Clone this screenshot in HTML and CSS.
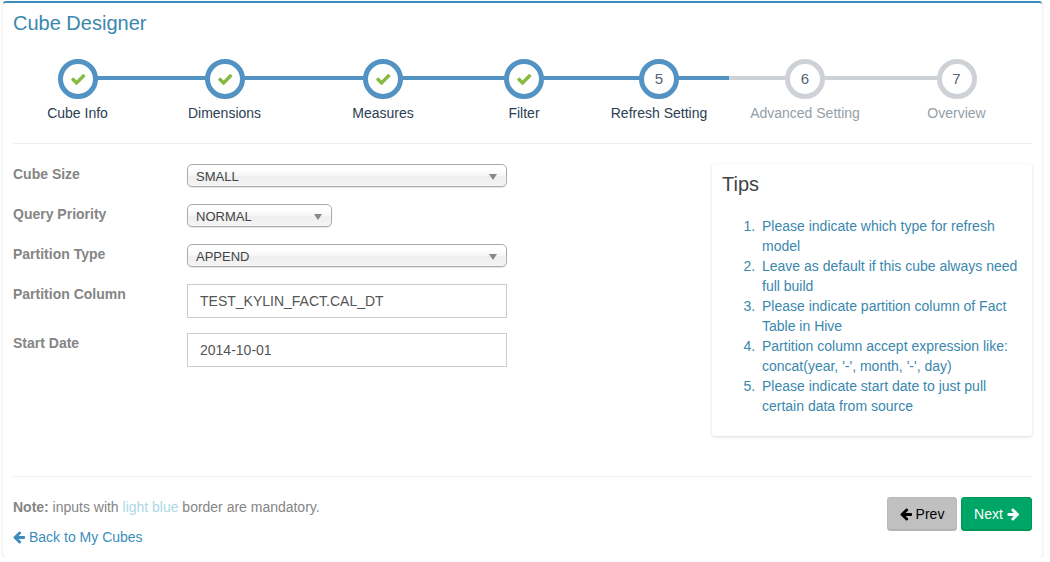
FILE: index.html
```html
<!DOCTYPE html>
<html lang="en">
<head>
<meta charset="utf-8">
<title>Cube Designer</title>
<link rel="stylesheet" href="styles.css">
</head>
<body>
<svg class="sprite" width="0" height="0">
  <symbol id="check" viewBox="0 0 1792 1792"><path d="M1671 566q0 40-28 68l-724 724-136 136q-28 28-68 28t-68-28l-136-136-362-362q-28-28-28-68t28-68l136-136q28-28 68-28t68 28l294 295 656-657q28-28 68-28t68 28l136 136q28 28 28 68z"/></symbol>
  <symbol id="left" viewBox="128 0 1536 1792"><path d="M1664 896v128q0 53-32.5 90.5t-84.5 37.5h-704l293 294q38 36 38 90t-38 90l-75 76q-37 37-90 37-52 0-91-37l-651-652q-37-37-37-90 0-52 37-91l651-650q38-38 91-38 52 0 90 38l75 74q38 38 38 91t-38 91l-293 293h704q52 0 84.5 37.5t32.5 90.5z"/></symbol>
  <symbol id="right" viewBox="64 0 1536 1792"><path d="M1600 960q0 54-37 91l-651 651q-39 37-91 37-51 0-90-37l-75-75q-38-38-38-91t38-91l293-293h-704q-52 0-84.5-37.5t-32.5-90.5v-128q0-53 32.5-90.5t84.5-37.5h704l-293-294q-38-36-38-90t38-90l75-75q38-38 90-38 53 0 91 38l651 651q37 35 37 90z"/></symbol>
</svg>
<main class="box">
  <h1 class="title">Cube Designer</h1>
  <ol class="steps">
    <li class="step done first"><span class="circle"><svg class="tick"><use href="#check"/></svg></span><span class="name">Cube Info</span></li>
    <li class="step done"><span class="circle"><svg class="tick"><use href="#check"/></svg></span><span class="name">Dimensions</span></li>
    <li class="step done"><span class="circle"><svg class="tick"><use href="#check"/></svg></span><span class="name">Measures</span></li>
    <li class="step done"><span class="circle"><svg class="tick"><use href="#check"/></svg></span><span class="name">Filter</span></li>
    <li class="step done"><span class="circle">5</span><span class="name">Refresh Setting</span></li>
    <li class="step"><span class="circle">6</span><span class="name">Advanced Setting</span></li>
    <li class="step last"><span class="circle">7</span><span class="name">Overview</span></li>
  </ol>
  <section class="content">
    <form class="form">
      <div class="row"><label class="label">Cube Size</label><div class="select"><span>SMALL</span><i class="caret"></i></div></div>
      <div class="row"><label class="label">Query Priority</label><div class="select narrow"><span>NORMAL</span><i class="caret"></i></div></div>
      <div class="row"><label class="label">Partition Type</label><div class="select"><span>APPEND</span><i class="caret"></i></div></div>
      <div class="row tall"><label class="label">Partition Column</label><div class="input">TEST_KYLIN_FACT.CAL_DT</div></div>
      <div class="row tall"><label class="label">Start Date</label><div class="input">2014-10-01</div></div>
    </form>
    <aside class="tips">
      <h2 class="tips-title">Tips</h2>
      <ol class="tips-list">
        <li>Please indicate which type for refresh<br>model</li>
        <li>Leave as default if this cube always need<br>full build</li>
        <li>Please indicate partition column of Fact<br>Table in Hive</li>
        <li>Partition column accept expression like:<br>concat(year, '-', month, '-', day)</li>
        <li>Please indicate start date to just pull<br>certain data from source</li>
      </ol>
    </aside>
  </section>
  <footer class="footer">
    <div class="notes">
      <div class="note"><b>Note:</b> inputs with <span class="light">light blue</span> border are mandatory.</div>
      <a class="back"><svg class="arrow"><use href="#left"/></svg><span>Back to My Cubes</span></a>
    </div>
    <div class="buttons">
      <button class="btn prev"><svg class="arrow"><use href="#left"/></svg><span>Prev</span></button>
      <button class="btn next"><span>Next</span><svg class="arrow"><use href="#right"/></svg></button>
    </div>
  </footer>
</main>
</body>
</html>
```
FILE: styles.css
```css
* { box-sizing: border-box; }
body {
  margin: 0;
  padding: 1px 8px 0 3px;
  background: #fff;
  color: #858585;
  font: 14px/20px "Liberation Sans", Arial, sans-serif;
}
.sprite { position: absolute; }
svg { fill: currentColor; flex: none; }
ol { margin: 0; padding: 0; }
.box {
  height: 556px;
  padding: 0 10px;
  border-top: 2px solid #3c8dbc;
  border-radius: 3px;
  box-shadow: 0 1px 3px rgba(0, 0, 0, .14);
}
.title {
  margin: 0;
  padding-top: 8px;
  height: 56px;
  color: #3a87ad;
  font-size: 20px;
  line-height: 24px;
  font-weight: 400;
}
.steps {
  display: grid;
  grid-template-columns: 129px 165px 152px 130px 140px 152px 151px;
  height: 85px;
  border-bottom: 1px solid #eee;
  list-style: none;
}
.step {
  --line: #ced1d6;
  display: flex;
  flex-direction: column;
  align-items: center;
  color: #949ea7;
  background: linear-gradient(var(--line), var(--line)) 0 17px / 100% 4px no-repeat;
}
.step.done { --line: #5293c4; color: #2b3d53; }
.step.first { background-position: 100% 17px; background-size: 50% 4px; }
.step.last { background-size: 50% 4px; }
.circle {
  display: flex;
  align-items: center;
  justify-content: center;
  width: 40px;
  height: 40px;
  border: 5px solid var(--line);
  border-radius: 50%;
  background: #fff;
  color: #546474;
  font-size: 15px;
}
.tick { width: 16.5px; height: 16.5px; margin-left: 1px; color: #87ba41; }
.name { margin-top: 4px; white-space: nowrap; }
.content {
  display: flex;
  justify-content: space-between;
  height: 333px;
  padding-top: 20px;
  border-bottom: 1px solid #eee;
}
.row { display: flex; height: 40px; }
.row.tall { height: 49px; }
.label { width: 174px; font-weight: 700; }
.select {
  display: flex;
  align-items: center;
  justify-content: space-between;
  width: 320px;
  height: 23px;
  padding: 2px 9px 0 8px;
  border: 1px solid #aaa;
  border-radius: 5px;
  background: linear-gradient(#fff 20%, #f6f6f6 50%, #eee 52%, #f4f4f4 100%);
  box-shadow: inset 0 0 3px #fff, 0 1px 1px rgba(0, 0, 0, .1);
  color: #444;
  font-size: 13px;
}
.select.narrow { width: 145px; }
.caret {
  border: 4px solid transparent;
  border-top: 6px solid #888;
  border-bottom: 0;
}
.input {
  width: 320px;
  height: 34px;
  padding: 6px 12px;
  border: 1px solid #ccc;
  color: #555;
}
.tips {
  width: 320px;
  height: 272px;
  padding: 9px 10px;
  border-radius: 3px;
  box-shadow: 0 1px 3px rgba(0, 0, 0, .15);
}
.tips-title {
  margin: 0 0 21px;
  color: #444;
  font-size: 20px;
  line-height: 22px;
  font-weight: 400;
}
.tips-list { padding-left: 37px; color: #3a87ad; white-space: nowrap; }
.tips-list li { padding-left: 3px; }
.footer { display: flex; justify-content: space-between; padding-top: 20px; }
.note { letter-spacing: -.01px; }
.light { color: #add8e6; }
.arrow { width: 12px; height: 14px; }
.back { display: flex; align-items: center; gap: 4px; margin-top: 10px; color: #3c8dbc; }
.buttons { display: flex; gap: 4px; }
.btn {
  display: flex;
  align-items: center;
  justify-content: center;
  gap: 4px;
  width: 70px;
  height: 34px;
  padding: 0;
  border: 1px solid #b9b9b9;
  border-radius: 3px;
  box-shadow: inset 0 -1px 0 rgba(0, 0, 0, .09);
  font: inherit;
}
.prev { background: #c0c0c0; color: #000; }
.next { width: 71px; background: #00a666; border-color: #009555; color: #fff; }
```
